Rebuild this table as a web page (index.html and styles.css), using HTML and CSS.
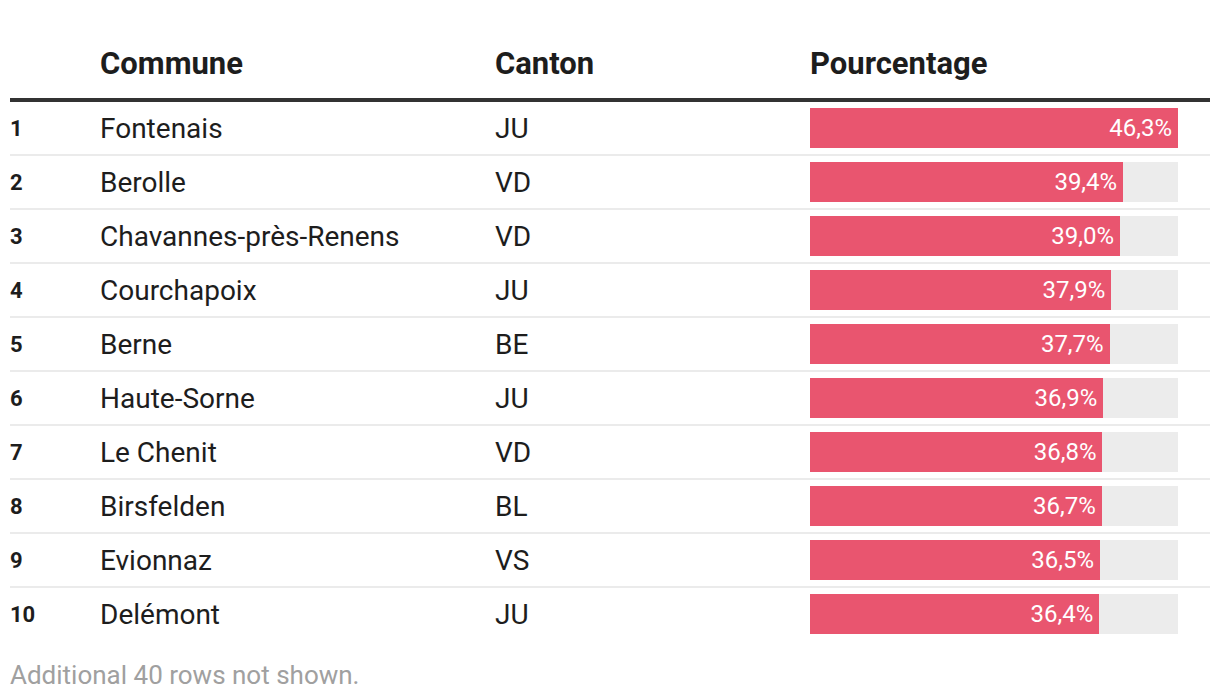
FILE: index.html
```html
<!DOCTYPE html>
<html lang="fr">
<head>
<meta charset="utf-8">
<link rel="stylesheet" href="styles.css">
</head>
<body>
<div class="table">
  <div class="row head">
    <div class="rank"></div>
    <div class="commune">Commune</div>
    <div class="canton">Canton</div>
    <div class="pct">Pourcentage</div>
  </div>
  <div class="row"><div class="rank">1</div><div class="commune">Fontenais</div><div class="canton">JU</div><div class="pct"><div class="track"><div class="bar" style="width:100%">46,3%</div></div></div></div>
  <div class="row"><div class="rank">2</div><div class="commune">Berolle</div><div class="canton">VD</div><div class="pct"><div class="track"><div class="bar" style="width:85.1%">39,4%</div></div></div></div>
  <div class="row"><div class="rank">3</div><div class="commune">Chavannes-près-Renens</div><div class="canton">VD</div><div class="pct"><div class="track"><div class="bar" style="width:84.23%">39,0%</div></div></div></div>
  <div class="row"><div class="rank">4</div><div class="commune">Courchapoix</div><div class="canton">JU</div><div class="pct"><div class="track"><div class="bar" style="width:81.86%">37,9%</div></div></div></div>
  <div class="row"><div class="rank">5</div><div class="commune">Berne</div><div class="canton">BE</div><div class="pct"><div class="track"><div class="bar" style="width:81.43%">37,7%</div></div></div></div>
  <div class="row"><div class="rank">6</div><div class="commune">Haute-Sorne</div><div class="canton">JU</div><div class="pct"><div class="track"><div class="bar" style="width:79.7%">36,9%</div></div></div></div>
  <div class="row"><div class="rank">7</div><div class="commune">Le Chenit</div><div class="canton">VD</div><div class="pct"><div class="track"><div class="bar" style="width:79.48%">36,8%</div></div></div></div>
  <div class="row"><div class="rank">8</div><div class="commune">Birsfelden</div><div class="canton">BL</div><div class="pct"><div class="track"><div class="bar" style="width:79.27%">36,7%</div></div></div></div>
  <div class="row"><div class="rank">9</div><div class="commune">Evionnaz</div><div class="canton">VS</div><div class="pct"><div class="track"><div class="bar" style="width:78.83%">36,5%</div></div></div></div>
  <div class="row last"><div class="rank">10</div><div class="commune">Delémont</div><div class="canton">JU</div><div class="pct"><div class="track"><div class="bar" style="width:78.62%">36,4%</div></div></div></div>
</div>
<p class="note">Additional 40 rows not shown.</p>
</body>
</html>
```
FILE: styles.css
```css
* { box-sizing: border-box; }
html, body { margin: 0; padding: 0; background: #fff; }
body {
  font-family: Roboto, "Noto Sans", "Liberation Sans", sans-serif;
  color: #1d1d1d;
  padding: 0 10px;
}
.table { width: 1200px; }
.row {
  display: grid;
  grid-template-columns: 90px 395px 315px 368px 32px;
  align-items: center;
  height: 54px;
  border-bottom: 2px solid #ebebeb;
  font-size: 28px;
  line-height: 1.2;
}
.row .commune, .row .canton, .row .rank { padding-top: 2px; }
.row.last { border-bottom: none; height: 52px; }
.head {
  height: 102px;
  border-bottom: 4px solid #333;
  font-weight: 700;
  font-size: 31px;
  align-items: end;
  padding-bottom: 16px;
}
.head .commune, .head .canton, .head .pct { padding-top: 0; }
.rank { font-weight: 700; font-size: 22px; }
.track {
  background: #ececec;
  height: 40px;
  width: 368px;
}
.bar {
  height: 40px;
  background: #e9556f;
  color: #fff;
  font-size: 24px;
  display: flex;
  align-items: center;
  justify-content: flex-end;
  padding-right: 6px;
}
.note {
  margin: 20px 0 0;
  font-size: 26px;
  color: #a0a0a0;
}
```
